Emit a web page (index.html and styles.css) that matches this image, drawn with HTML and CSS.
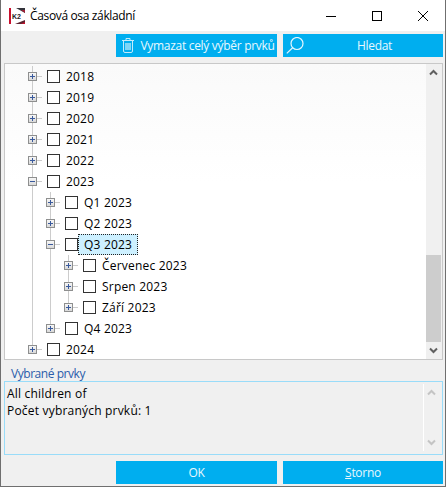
FILE: index.html
```html
<!DOCTYPE html>
<html>
<head>
  <title>Časová osa základní</title>
  <link rel="stylesheet" href="styles.css">
</head>
<body>

  <div class="window">
    <div class="titlebar">
      <svg class="logo" width="16" height="16" viewBox="0 0 16 16">
        <rect width="16" height="16" fill="#fff"/>
        <rect width="2" height="16" fill="#c8102e"/>
        <path d="M7 0h9v5z" fill="#33333a"/>
        <path d="M12 2h4v3z" fill="#a02038"/>
        <path d="M6 16l10-4v4z" fill="#5a2430"/>
        <path d="M12 16l4-2v2z" fill="#c8102e"/>
        <text x="3" y="11" class="logo-text">K2</text>
      </svg>
      <span class="title">Časová osa základní</span>
      <div class="win-controls">
        <svg width="46" height="30" viewBox="0 0 46 30"><path d="M18 15.5h10" stroke="#000" fill="none"/></svg>
        <svg width="46" height="30" viewBox="0 0 46 30"><rect x="18.5" y="10.5" width="9" height="9" stroke="#000" fill="none"/></svg>
        <svg width="46" height="30" viewBox="0 0 46 30"><path d="M18 10l10 10M28 10L18 20" stroke="#000" fill="none"/></svg>
      </div>
    </div>

    <div class="content">
      <div class="toolbar">
        <button class="btn">
          <svg class="btn-icon trash" width="12" height="15" viewBox="0 0 12 15" fill="none" stroke="#c4ebfb">
            <path d="M0 2.5h12M4 2.5v-2h4v2M1.5 2.5v10.5q0 1.500 1.500 1.500h6q1.500 0 1.500-1.500v-10.500"/>
            <path d="M4 5v7M6 5v7M8 5v7" stroke-width="1.300"/>
          </svg>
          <span class="btn-label">Vymazat celý výběr prvků</span>
        </button>
        <button class="btn">
          <svg class="btn-icon glass" width="18" height="17" viewBox="0 0 18 17" fill="none" stroke="#e4f6fe" stroke-width="1.2">
            <circle cx="11" cy="6.5" r="6"/>
            <path d="M6.6 10.8L.8 16.4"/>
          </svg>
          <span class="btn-label">Hledat</span>
        </button>
      </div>

      <div class="tree-box">
        <div class="tree">
          <div class="row"><span class="guide line"><i class="exp"></i></span><span class="stub"></span><span class="check"></span><span class="text">2018</span></div>
          <div class="row"><span class="guide line"><i class="exp"></i></span><span class="stub"></span><span class="check"></span><span class="text">2019</span></div>
          <div class="row"><span class="guide line"><i class="exp"></i></span><span class="stub"></span><span class="check"></span><span class="text">2020</span></div>
          <div class="row"><span class="guide line"><i class="exp"></i></span><span class="stub"></span><span class="check"></span><span class="text">2021</span></div>
          <div class="row"><span class="guide line"><i class="exp"></i></span><span class="stub"></span><span class="check"></span><span class="text">2022</span></div>
          <div class="row"><span class="guide line"><i class="exp open"></i></span><span class="stub"></span><span class="check"></span><span class="text">2023</span></div>
          <div class="row"><span class="guide line"></span><span class="guide line"><i class="exp"></i></span><span class="stub"></span><span class="check"></span><span class="text">Q1 2023</span></div>
          <div class="row"><span class="guide line"></span><span class="guide line"><i class="exp"></i></span><span class="stub"></span><span class="check"></span><span class="text">Q2 2023</span></div>
          <div class="row"><span class="guide line"></span><span class="guide line"><i class="exp open"></i></span><span class="stub"></span><span class="check"></span><span class="text selected">Q3 2023</span></div>
          <div class="row"><span class="guide line"></span><span class="guide line"></span><span class="guide line"><i class="exp"></i></span><span class="stub"></span><span class="check"></span><span class="text">Červenec 2023</span></div>
          <div class="row"><span class="guide line"></span><span class="guide line"></span><span class="guide line"><i class="exp"></i></span><span class="stub"></span><span class="check"></span><span class="text">Srpen 2023</span></div>
          <div class="row"><span class="guide line"></span><span class="guide line"></span><span class="guide line end"><i class="exp"></i></span><span class="stub"></span><span class="check"></span><span class="text">Září 2023</span></div>
          <div class="row"><span class="guide line"></span><span class="guide line end"><i class="exp"></i></span><span class="stub"></span><span class="check"></span><span class="text">Q4 2023</span></div>
          <div class="row"><span class="guide line end"><i class="exp"></i></span><span class="stub"></span><span class="check"></span><span class="text">2024</span></div>
        </div>
        <div class="scrollbar">
          <svg class="arrow" width="16" height="17" viewBox="1 0 16 17"><path d="M5 10.5l3.5-3.5 3.5 3.5" stroke="#606060" stroke-width="2" fill="none"/></svg>
          <div class="track"><div class="thumb"></div></div>
          <svg class="arrow" width="16" height="17" viewBox="1 0 16 17"><path d="M5 6.5l3.5 3.5 3.5-3.5" stroke="#606060" stroke-width="2" fill="none"/></svg>
        </div>
      </div>

      <div class="sel-label">Vybrané prvky</div>
      <div class="sel-box">
        <div class="sel-text">
          <div>All children of</div>
          <div>Počet vybraných prvků: 1</div>
        </div>
        <div class="sel-scroll">
          <svg width="18" height="17" viewBox="1 0 18 17"><path d="M5 10.5l3.5-3.5 3.5 3.5" stroke="#c4c4c4" stroke-width="2" fill="none"/></svg>
          <svg width="18" height="17" viewBox="1 0 18 17"><path d="M5 6.5l3.5 3.5 3.5-3.5" stroke="#c4c4c4" stroke-width="2" fill="none"/></svg>
        </div>
      </div>

      <div class="footer">
        <button class="btn">OK</button>
        <button class="btn"><span><u>S</u>torno</span></button>
      </div>
    </div>
  </div>

</body>
</html>
```

FILE: styles.css
```css
* {
  box-sizing: border-box;
}

body {
  margin: 0;
  background: #fff;
  font-family: "Open Sans", "Noto Sans", sans-serif;
  font-size: 12px;
  color: #000;
}

.window {
  width: 446px;
  height: 487px;
  border: 1px solid #6f6f6f;
  border-top: 0;
  display: flex;
  flex-direction: column;
  background: #f0f0f0;
}

.titlebar {
  height: 31px;
  flex: none;
  background: #fff;
  display: flex;
  align-items: center;
  padding-left: 8px;
}

.logo {
  flex: none;
}

.logo-text {
  font-family: "Liberation Sans", sans-serif;
  font-size: 7px;
  font-weight: bold;
  fill: #222;
}

.title {
  margin-left: 5px;
  flex: 1;
  letter-spacing: -0.35px;
}

.win-controls {
  display: flex;
  margin-right: -1px;
}

.content {
  flex: 1;
  display: flex;
  flex-direction: column;
  padding: 3px 2px 2px 3px;
}

.toolbar,
.footer {
  display: flex;
  justify-content: flex-end;
  gap: 6px;
  flex: none;
}

.btn {
  width: 160px;
  height: 23px;
  padding: 0;
  border: 0;
  background: #00aeef;
  color: #e8f8fe;
  font-family: inherit;
  font-size: 12px;
  letter-spacing: -0.3px;
  display: flex;
  align-items: center;
  justify-content: center;
}

.toolbar .btn:first-child,
.footer .btn:first-child {
  width: 161px;
}

.btn-icon {
  flex: none;
}

.trash {
  margin-left: 6px;
}

.glass {
  margin-left: 3px;
}

.btn-label {
  flex: 1;
  text-align: center;
  white-space: nowrap;
  padding-left: 4px;
}

.glass + .btn-label {
  padding-left: 2px;
}

.tree-box {
  margin-top: 6px;
  height: 297px;
  flex: none;
  background: #fff;
  border: 1px solid #c8c8c8;
  display: flex;
  overflow: hidden;
}

.tree {
  flex: 1;
  padding: 2px 0 0 18px;
  background: linear-gradient(#fafafa, #fff 40%);
}

.row {
  height: 21px;
  display: flex;
  align-items: center;
}

.guide {
  width: 18px;
  height: 21px;
  flex: none;
  display: flex;
  align-items: center;
  padding-left: 5px;
}

.line {
  background: linear-gradient(#ccc, #ccc) 9px 0 / 1px 100% no-repeat;
}

.line.end {
  background-size: 1px 50%;
}

.exp {
  display: block;
  width: 9px;
  height: 9px;
  border: 1px solid #8e8f8f;
  background: linear-gradient(#3a5a9c, #3a5a9c) center / 5px 1px no-repeat,
    linear-gradient(#3a5a9c, #3a5a9c) center / 1px 5px no-repeat,
    linear-gradient(#f7f7f7, #d9d9d9);
}

.exp.open {
  background: linear-gradient(#3a5a9c, #3a5a9c) center / 5px 1px no-repeat,
    linear-gradient(#f7f7f7, #d9d9d9);
}

.stub {
  height: 1px;
  margin-left: -4px;
  width: 5px;
  background: #ccc;
  flex: none;
}

.check {
  width: 13px;
  height: 13px;
  border: 1px solid #333;
  background: #fff;
  margin-left: 5px;
  flex: none;
}

.text {
  margin-left: 4px;
  padding: 0 1px;
  height: 19px;
  line-height: 18px;
  letter-spacing: 0.2px;
  white-space: nowrap;
  border: 1px solid transparent;
}

.text.selected {
  background: #cdf0ff;
  border: 1px dotted #222;
  margin-left: 0;
  padding: 0 5px;
  height: 21px;
  line-height: 19px;
}

.scrollbar {
  width: 16px;
  flex: none;
  background: #f0f0f0;
  display: flex;
  flex-direction: column;
}

.arrow {
  flex: none;
}

.track {
  flex: 1;
  padding-top: 174px;
}

.thumb {
  width: 15px;
  height: 87px;
  background: #cdcdcd;
}

.sel-label {
  margin: 7px 0 0 7px;
  height: 14px;
  line-height: 14px;
  letter-spacing: -0.45px;
  color: #2a5caa;
  flex: none;
}

.sel-box {
  height: 74px;
  flex: none;
  border: 1px solid #99dcf9;
  display: flex;
  background: #f0f0f0;
}

.sel-text {
  flex: 1;
  padding: 3px 0 0 2px;
  line-height: 17px;
  letter-spacing: 0.2px;
}

.sel-scroll {
  width: 19px;
  margin: 2px 0 3px;
  border-left: 1px solid #fff;
  display: flex;
  flex-direction: column;
  justify-content: space-between;
}

.footer {
  margin-top: 6px;
}
```
